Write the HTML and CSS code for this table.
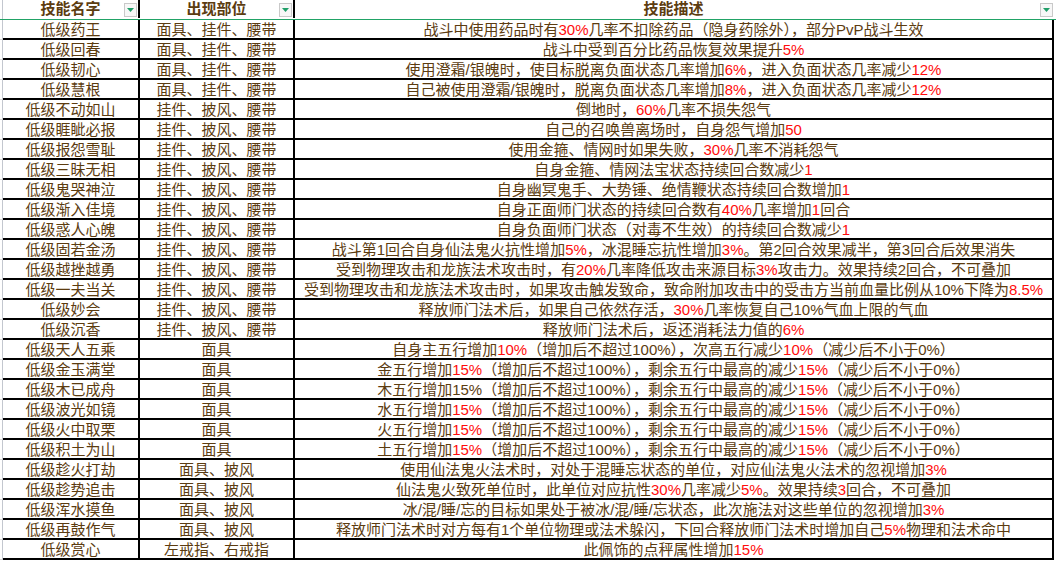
FILE: index.html
```html
<!DOCTYPE html>
<html lang="zh-CN">
<head>
<meta charset="utf-8">
<title>技能表</title>
<link rel="stylesheet" href="styles.css">
</head>
<body>
<div class="sheet">
  <div class="row head">
    <div class="gut"></div>
    <div class="c c1">技能名字<span class="flt"><svg viewBox="0 0 7 4" width="7" height="4"><path d="M0 0H7L3.5 4Z"/></svg></span></div>
    <div class="c c2">出现部位<span class="flt"><svg viewBox="0 0 7 4" width="7" height="4"><path d="M0 0H7L3.5 4Z"/></svg></span></div>
    <div class="c c3">技能描述<span class="flt"><svg viewBox="0 0 7 4" width="7" height="4"><path d="M0 0H7L3.5 4Z"/></svg></span></div>
  </div>

  <div class="row"><div class="gut"></div><div class="c c1">低级药王</div><div class="c c2">面具、挂件、腰带</div><div class="c c3">战斗中使用药品时有<span class="hl">30%</span>几率不扣除药品（隐身药除外），部分PvP战斗生效</div></div>
  <div class="row"><div class="gut"></div><div class="c c1">低级回春</div><div class="c c2">面具、挂件、腰带</div><div class="c c3">战斗中受到百分比药品恢复效果提升<span class="hl">5%</span></div></div>
  <div class="row"><div class="gut"></div><div class="c c1">低级韧心</div><div class="c c2">面具、挂件、腰带</div><div class="c c3">使用澄霜/银魄时，使目标脱离负面状态几率增加<span class="hl">6%</span>，进入负面状态几率减少<span class="hl">12%</span></div></div>
  <div class="row"><div class="gut"></div><div class="c c1">低级慧根</div><div class="c c2">面具、挂件、腰带</div><div class="c c3">自己被使用澄霜/银魄时，脱离负面状态几率增加<span class="hl">8%</span>，进入负面状态几率减少<span class="hl">12%</span></div></div>
  <div class="row"><div class="gut"></div><div class="c c1">低级不动如山</div><div class="c c2">挂件、披风、腰带</div><div class="c c3">倒地时，<span class="hl">60%</span>几率不损失怨气</div></div>
  <div class="row"><div class="gut"></div><div class="c c1">低级睚眦必报</div><div class="c c2">挂件、披风、腰带</div><div class="c c3">自己的召唤兽离场时，自身怨气增加<span class="hl">50</span></div></div>
  <div class="row"><div class="gut"></div><div class="c c1">低级报怨雪耻</div><div class="c c2">挂件、披风、腰带</div><div class="c c3">使用金箍、情网时如果失败，<span class="hl">30%</span>几率不消耗怨气</div></div>
  <div class="row"><div class="gut"></div><div class="c c1">低级三昧无相</div><div class="c c2">挂件、披风、腰带</div><div class="c c3">自身金箍、情网法宝状态持续回合数减少<span class="hl">1</span></div></div>
  <div class="row"><div class="gut"></div><div class="c c1">低级鬼哭神泣</div><div class="c c2">挂件、披风、腰带</div><div class="c c3">自身幽冥鬼手、大势锤、绝情鞭状态持续回合数增加<span class="hl">1</span></div></div>
  <div class="row"><div class="gut"></div><div class="c c1">低级渐入佳境</div><div class="c c2">挂件、披风、腰带</div><div class="c c3">自身正面师门状态的持续回合数有<span class="hl">40%</span>几率增加<span class="hl">1</span>回合</div></div>
  <div class="row"><div class="gut"></div><div class="c c1">低级惑人心魄</div><div class="c c2">挂件、披风、腰带</div><div class="c c3">自身负面师门状态（对毒不生效）的持续回合数减少<span class="hl">1</span></div></div>
  <div class="row"><div class="gut"></div><div class="c c1">低级固若金汤</div><div class="c c2">挂件、披风、腰带</div><div class="c c3">战斗第1回合自身仙法鬼火抗性增加<span class="hl">5%</span>，冰混睡忘抗性增加<span class="hl">3%</span>。第2回合效果减半，第3回合后效果消失</div></div>
  <div class="row"><div class="gut"></div><div class="c c1">低级越挫越勇</div><div class="c c2">挂件、披风、腰带</div><div class="c c3">受到物理攻击和龙族法术攻击时，有<span class="hl">20%</span>几率降低攻击来源目标<span class="hl">3%</span>攻击力。效果持续2回合，不可叠加</div></div>
  <div class="row"><div class="gut"></div><div class="c c1">低级一夫当关</div><div class="c c2">挂件、披风、腰带</div><div class="c c3">受到物理攻击和龙族法术攻击时，如果攻击触发致命，致命附加攻击中的受击方当前血量比例从10%下降为<span class="hl">8.5%</span></div></div>
  <div class="row"><div class="gut"></div><div class="c c1">低级妙会</div><div class="c c2">挂件、披风、腰带</div><div class="c c3">释放师门法术后，如果自己依然存活，<span class="hl">30%</span>几率恢复自己10%气血上限的气血</div></div>
  <div class="row"><div class="gut"></div><div class="c c1">低级沉香</div><div class="c c2">挂件、披风、腰带</div><div class="c c3">释放师门法术后，返还消耗法力值的<span class="hl">6%</span></div></div>
  <div class="row"><div class="gut"></div><div class="c c1">低级天人五乘</div><div class="c c2">面具</div><div class="c c3">自身主五行增加<span class="hl">10%</span>（增加后不超过100%），次高五行减少<span class="hl">10%</span>（减少后不小于0%）</div></div>
  <div class="row"><div class="gut"></div><div class="c c1">低级金玉满堂</div><div class="c c2">面具</div><div class="c c3">金五行增加<span class="hl">15%</span>（增加后不超过100%），剩余五行中最高的减少<span class="hl">15%</span>（减少后不小于0%）</div></div>
  <div class="row"><div class="gut"></div><div class="c c1">低级木已成舟</div><div class="c c2">面具</div><div class="c c3">木五行增加15%（增加后不超过100%），剩余五行中最高的减少<span class="hl">15%</span>（减少后不小于0%）</div></div>
  <div class="row"><div class="gut"></div><div class="c c1">低级波光如镜</div><div class="c c2">面具</div><div class="c c3">水五行增加<span class="hl">15%</span>（增加后不超过100%），剩余五行中最高的减少<span class="hl">15%</span>（减少后不小于0%）</div></div>
  <div class="row"><div class="gut"></div><div class="c c1">低级火中取栗</div><div class="c c2">面具</div><div class="c c3">火五行增加<span class="hl">15%</span>（增加后不超过100%），剩余五行中最高的减少<span class="hl">15%</span>（减少后不小于0%）</div></div>
  <div class="row"><div class="gut"></div><div class="c c1">低级积土为山</div><div class="c c2">面具</div><div class="c c3">土五行增加<span class="hl">15%</span>（增加后不超过100%），剩余五行中最高的减少<span class="hl">15%</span>（减少后不小于0%）</div></div>
  <div class="row"><div class="gut"></div><div class="c c1">低级趁火打劫</div><div class="c c2">面具、披风</div><div class="c c3">使用仙法鬼火法术时，对处于混睡忘状态的单位，对应仙法鬼火法术的忽视增加<span class="hl">3%</span></div></div>
  <div class="row"><div class="gut"></div><div class="c c1">低级趁势追击</div><div class="c c2">面具、披风</div><div class="c c3">仙法鬼火致死单位时，此单位对应抗性<span class="hl">30%</span>几率减少<span class="hl">5%</span>。效果持续<span class="hl">3</span>回合，不可叠加</div></div>
  <div class="row"><div class="gut"></div><div class="c c1">低级浑水摸鱼</div><div class="c c2">面具、披风</div><div class="c c3">冰/混/睡/忘的目标如果处于被冰/混/睡/忘状态，此次施法对这些单位的忽视增加<span class="hl">3%</span></div></div>
  <div class="row"><div class="gut"></div><div class="c c1">低级再鼓作气</div><div class="c c2">面具、披风</div><div class="c c3">释放师门法术时对方每有1个单位物理或法术躲闪，下回合释放师门法术时增加自己<span class="hl">5%</span>物理和法术命中</div></div>
  <div class="row"><div class="gut"></div><div class="c c1">低级赏心</div><div class="c c2">左戒指、右戒指</div><div class="c c3">此佩饰的点秤属性增加<span class="hl">15%</span></div></div>
</div>
</body>
</html>
```

FILE: styles.css
```css
html, body {
  margin: 0;
  padding: 0;
  background: #ffffff;
}

body {
  font-family: "Liberation Sans", "Noto Sans CJK SC", sans-serif;
  font-size: 15px;
  color: #5c3c10;
  width: 1056px;
  height: 561px;
  overflow: hidden;
}

.sheet {
  display: flex;
  flex-direction: column;
  width: 1056px;
}

.row {
  display: flex;
  height: 20px;
}

.gut {
  width: 3px;
  flex: none;
  box-sizing: border-box;
  border-right: 1px solid #c3c7cf;
  border-bottom: 1px solid #d4d4d4;
  margin-bottom: 0;
}

.c {
  flex: none;
  box-sizing: border-box;
  height: 20px;
  border-right: 2px solid #000;
  border-bottom: 2px solid #000;
  text-align: center;
  white-space: nowrap;
  line-height: 20px;
  overflow: visible;
}

.c1 { width: 137px; }
.c2 { width: 155px; }
.c3 { width: 759px; }

.hl {
  color: #ff0d0d;
}

.head {
  height: 19px;
  border-bottom: 1px solid #21a366;
}

.head .gut {
  border-bottom: none;
}

.head .c {
  position: relative;
  height: 18px;
  border-bottom: none;
  font-weight: 700;
  line-height: 17px;
}

.head .c3 {
  border-right-color: transparent;
}

.flt {
  position: absolute;
  right: 1px;
  top: 3px;
  width: 13px;
  height: 14px;
  box-sizing: border-box;
  border: 1px solid #c9c9c9;
  background: #f7f7f7;
  display: flex;
  align-items: center;
  justify-content: center;
}

.head .c3 .flt {
  right: -1px;
}

.flt svg {
  display: block;
  fill: #1f9e68;
}
```
